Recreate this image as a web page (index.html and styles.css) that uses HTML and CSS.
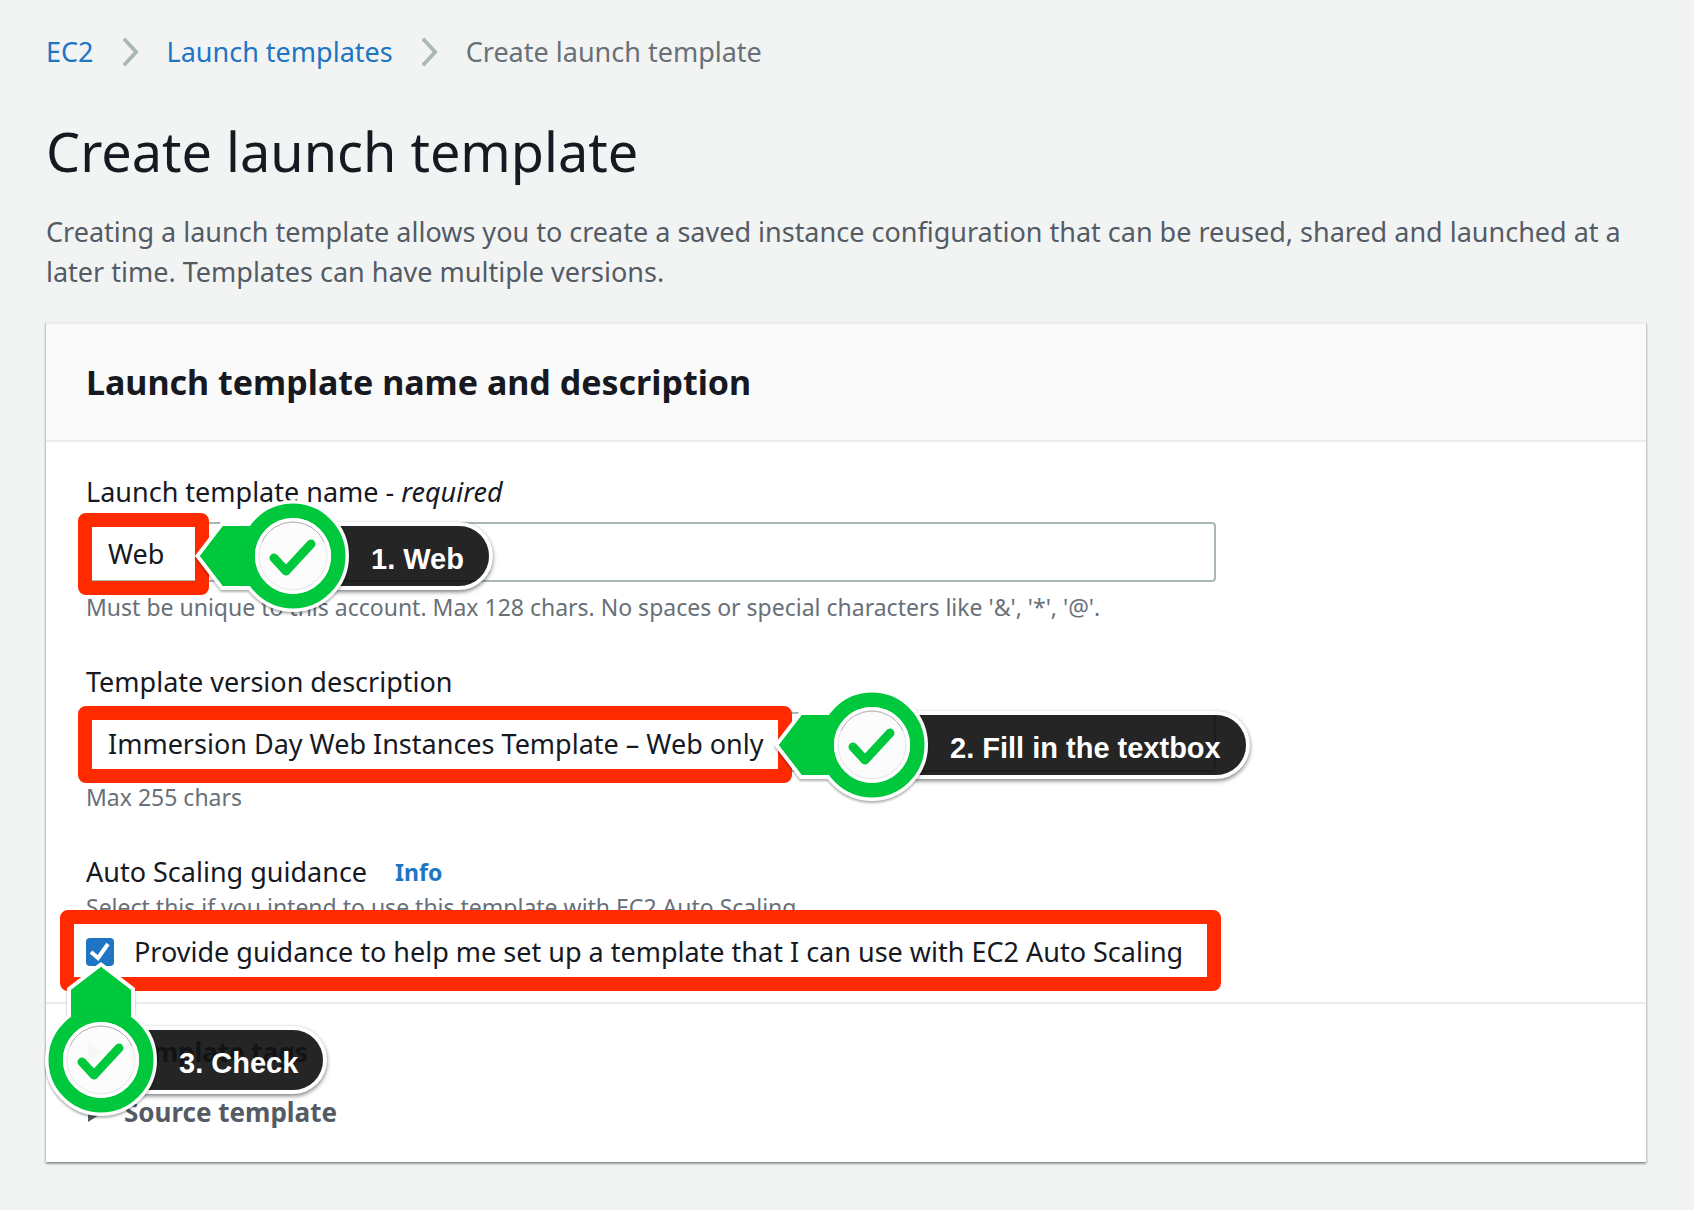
FILE: index.html
```html
<!DOCTYPE html>
<html lang="en">
<head>
<meta charset="utf-8">
<meta name="viewport" content="width=device-width, initial-scale=1">
<title>Create launch template</title>
<link rel="stylesheet" href="styles.css">
</head>
<body>
<svg class="defs" aria-hidden="true">
  <symbol id="badge" viewBox="-60 -60 120 120">
    <circle r="47" fill="none" stroke="#fff" stroke-width="18"/>
    <circle r="45" fill="none" stroke="#00c83c" stroke-width="15"/>
    <circle r="38" fill="#fff" fill-opacity=".96"/>
    <circle r="36" fill="none" stroke="#fff" stroke-width="4"/>
    <circle r="34" fill="none" stroke="#e4e4e4" stroke-width="1"/>
    <path d="M-31 -14A34 34 0 0 1 31 -14" fill="none" stroke="#b4b4b4" stroke-width="1"/>
    <path d="M-19 2L-7 15L18 -12" fill="none" stroke="#00c83c" stroke-width="9" stroke-linecap="round" stroke-linejoin="round"/>
  </symbol>
</svg>
<main class="page">
  <nav class="breadcrumb" aria-label="Breadcrumb">
    <a href="#ec2">EC2</a>
    <svg class="chevron" viewBox="0 0 18 30" aria-hidden="true"><path d="M2 1L15 15L2 29"/></svg>
    <a href="#templates">Launch templates</a>
    <svg class="chevron" viewBox="0 0 18 30" aria-hidden="true"><path d="M2 1L15 15L2 29"/></svg>
    <span>Create launch template</span>
  </nav>
  <h1 class="title">Create launch template</h1>
  <p class="intro">Creating a launch template allows you to create a saved instance configuration that can be reused, shared and launched at a later time. Templates can have multiple versions.</p>

  <section class="card">
    <header class="card-header"><h2>Launch template name and description</h2></header>
    <form class="card-body">
      <div class="field">
        <label class="label" for="name">Launch template name - <em>required</em></label>
        <input class="text-input" id="name" type="text" value="Web">
        <p class="hint">Must be unique to this account. Max 128 chars. No spaces or special characters like '&amp;', '*', '@'.</p>
        <div class="frame frame-name"></div>
        <div class="marker marker-name">
          <svg class="pointer" viewBox="-100 -60 160 120" aria-hidden="true">
            <path d="M-93 0L-70 -30H-42V30H-70Z" fill="#00c83c" stroke="#fff" stroke-width="8" paint-order="stroke"/>
            <use href="#badge" x="-60" y="-60" width="120" height="120"/>
            <path d="M-93 0L-70 -30H-36A47 47 0 0 0 -36 30H-70Z" fill="#00c83c"/>
          </svg>
          <span>1. Web</span>
        </div>
      </div>

      <div class="field">
        <label class="label" for="description">Template version description</label>
        <input class="text-input" id="description" type="text" value="Immersion Day Web Instances Template – Web only">
        <p class="hint">Max 255 chars</p>
        <div class="frame frame-description"></div>
        <div class="marker marker-description">
          <svg class="pointer" viewBox="-100 -60 160 120" aria-hidden="true">
            <path d="M-93 0L-70 -30H-42V30H-70Z" fill="#00c83c" stroke="#fff" stroke-width="8" paint-order="stroke"/>
            <use href="#badge" x="-60" y="-60" width="120" height="120"/>
            <path d="M-93 0L-70 -30H-36A47 47 0 0 0 -36 30H-70Z" fill="#00c83c"/>
          </svg>
          <span>2. Fill in the textbox</span>
        </div>
      </div>

      <div class="field">
        <div class="label label-row"><span>Auto Scaling guidance</span><a class="info" href="#info">Info</a></div>
        <p class="hint hint-tight">Select this if you intend to use this template with EC2 Auto Scaling</p>
        <label class="check-row" for="guidance">
          <span class="check">
            <input id="guidance" type="checkbox" checked>
            <svg viewBox="0 0 28 28" aria-hidden="true"><path d="M5 14L12 20L22 6"/></svg>
          </span>
          <span>Provide guidance to help me set up a template that I can use with EC2 Auto Scaling</span>
        </label>
        <div class="frame frame-guidance"></div>
      </div>
    </form>
    <div class="card-footer">
      <button class="expander" type="button"><svg viewBox="0 0 16 20" aria-hidden="true"><path d="M0 0L16 10L0 20Z"/></svg>Template tags</button>
      <button class="expander" type="button"><svg viewBox="0 0 16 20" aria-hidden="true"><path d="M0 0L16 10L0 20Z"/></svg>Source template</button>
      <div class="marker marker-check">
        <svg class="pointer pointer-up" viewBox="-60 -100 120 160" aria-hidden="true">
          <path d="M0 -93L-30 -70V-42H30V-70Z" fill="#00c83c" stroke="#fff" stroke-width="8" paint-order="stroke"/>
          <use href="#badge" x="-60" y="-60" width="120" height="120"/>
          <path d="M0 -93L-30 -70V-36A47 47 0 0 1 30 -36V-70Z" fill="#00c83c"/>
        </svg>
        <span>3. Check</span>
      </div>
    </div>
  </section>
</main>
</body>
</html>
```
FILE: styles.css
```css
* { box-sizing: border-box; }

body {
  margin: 0;
  background: #f2f4f4;
  color: #16191f;
  font-family: "Noto Sans", "Open Sans", sans-serif;
  font-size: 27px;
  line-height: 40px;
}

h1, h2, p { margin: 0; }
a { color: #2074c4; text-decoration: none; }
.defs { position: absolute; width: 0; height: 0; }

.page { padding: 32px 48px 48px 46px; }

.breadcrumb {
  display: flex;
  align-items: center;
  gap: 28px;
  color: #687078;
}
.chevron { width: 17px; height: 30px; fill: none; stroke: #aab7b8; stroke-width: 4; }

.title {
  margin-top: 44px;
  font-size: 54px;
  font-weight: 400;
  line-height: 70px;
}
.intro { margin-top: 26px; color: #545b64; }

.card {
  margin-top: 30px;
  background: #fff;
  border-top: 2px solid #eaeded;
  box-shadow: 0 2px 2px 0 rgba(0, 28, 36, .3), 1px 1px 2px 0 rgba(0, 28, 36, .15), -1px 1px 2px 0 rgba(0, 28, 36, .15);
}
.card-header {
  padding: 36px 40px;
  background: #fafafa;
  border-bottom: 2px solid #eaeded;
}
.card-header h2 { font-size: 34px; font-weight: 700; line-height: 44px; }

.card-body {
  display: flex;
  flex-direction: column;
  gap: 38px;
  padding: 30px 40px;
}
.field { position: relative; max-width: 1130px; }
.label { display: block; }
.label-row { display: flex; gap: 28px; }
.info { font-size: 23px; font-weight: 700; }

.text-input {
  display: block;
  width: 100%;
  height: 60px;
  margin-top: 10px;
  padding: 2px 20px 0;
  border: 2px solid #aab7b8;
  border-radius: 4px;
  background: #fff;
  color: inherit;
  font: inherit;
}
.hint {
  margin-top: 8px;
  color: #687078;
  font-size: 23px;
  line-height: 34px;
}
.hint-tight { margin-top: -2px; }

.check-row { display: flex; align-items: center; gap: 20px; margin-top: 8px; }
.check { display: grid; flex: none; }
.check > * { grid-area: 1 / 1; width: 28px; height: 28px; margin: 0; }
.check input { appearance: none; border-radius: 4px; background: #2074c4; }
.check svg { fill: none; stroke: #fff; stroke-width: 4; pointer-events: none; }

.card-footer {
  position: relative;
  display: flex;
  flex-direction: column;
  align-items: flex-start;
  gap: 20px;
  padding: 28px 40px 30px;
  border-top: 2px solid #eaeded;
}
.expander {
  display: flex;
  align-items: center;
  gap: 20px;
  padding: 0 2px;
  border: 0;
  background: none;
  color: #545b64;
  font: inherit;
  font-size: 26px;
  font-weight: 700;
}
.expander svg { width: 16px; height: 20px; fill: currentColor; }

/* Walkthrough annotations laid over the form */
.frame {
  position: absolute;
  border: 14px solid #ff2a00;
  border-radius: 8px;
  pointer-events: none;
}
.frame-name { left: -8px; top: 41px; width: 131px; height: 82px; }
.frame-description { left: -8px; top: 44px; width: 714px; height: 77px; }
.frame-guidance { left: -26px; top: 58px; width: 1161px; height: 81px; }

.marker {
  position: absolute;
  z-index: 1;
  height: 60px;
  padding: 0 25px 0 34px;
  border-radius: 0 30px 30px 0;
  background: rgba(10, 10, 10, .89);
  box-shadow: 0 0 0 4px #fff, 0 2px 4px 4px rgba(0, 0, 0, .5);
  color: #fff;
  font: 700 29px/66px "Liberation Sans", sans-serif;
  white-space: nowrap;
}
.pointer {
  position: absolute;
  left: -144px;
  top: -30px;
  width: 160px;
  height: 120px;
  filter: drop-shadow(0 2px 1px rgba(0, 0, 0, .3));
}
.pointer-up { left: -104px; top: -70px; width: 120px; height: 160px; }
.marker-name { left: 251px; top: 54px; }
.marker-description { left: 830px; top: 53px; }
.marker-check { left: 99px; top: 26px; }
```
